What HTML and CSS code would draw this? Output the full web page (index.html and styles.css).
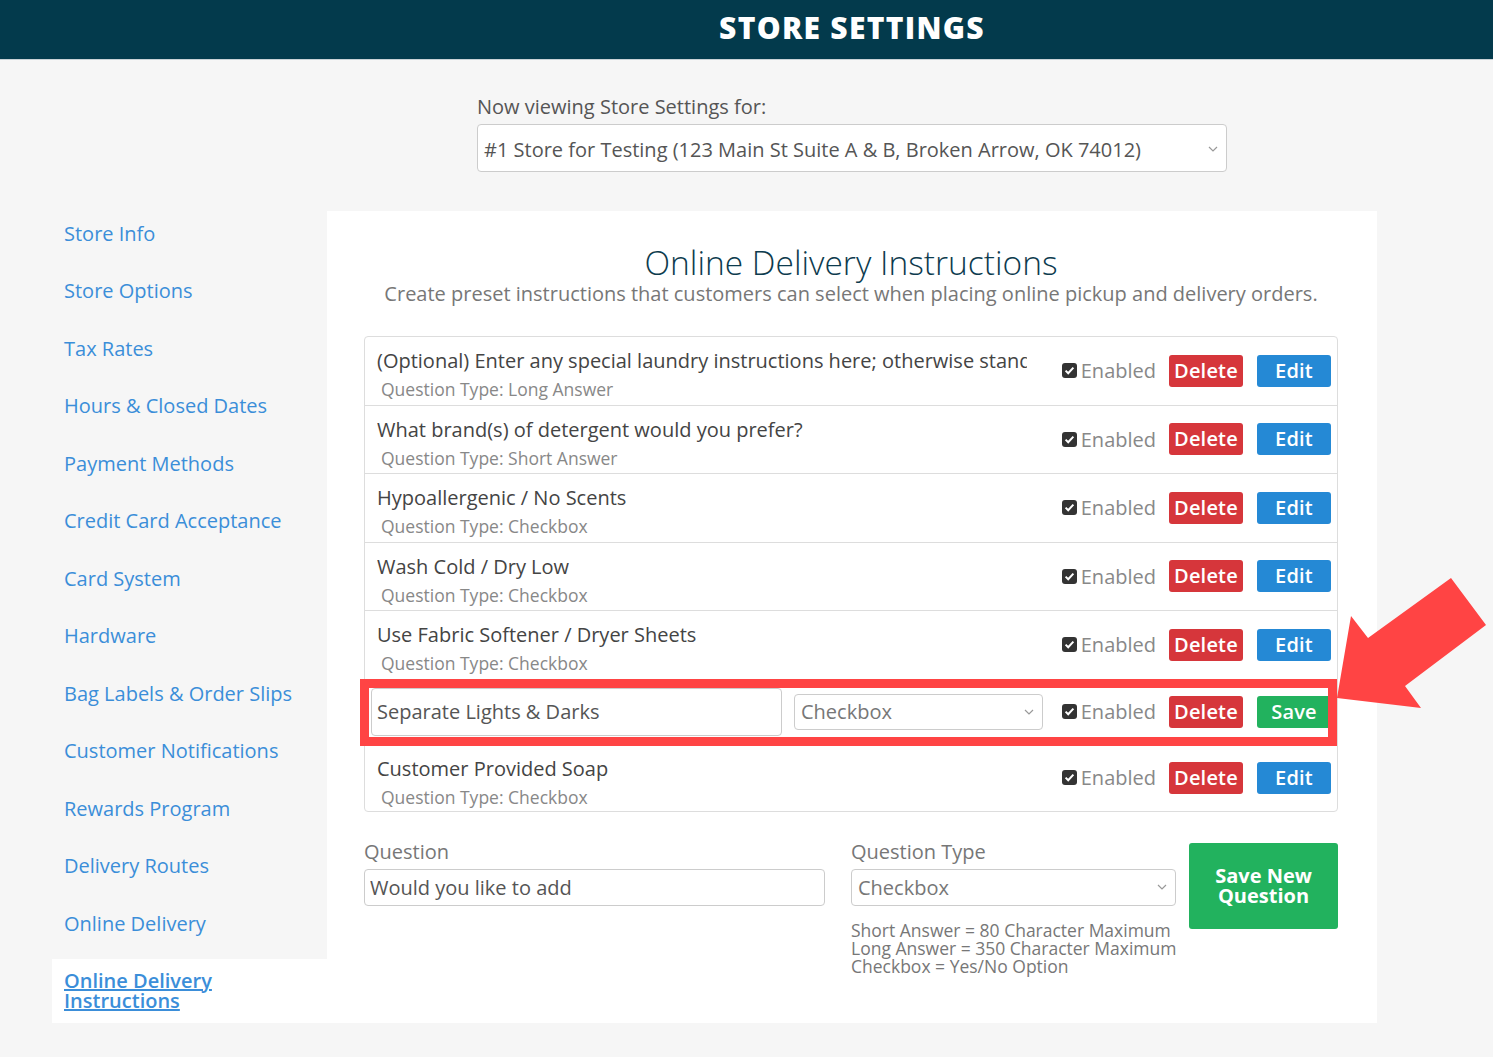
FILE: index.html
```html
<!DOCTYPE html>
<html lang="en">
<head>
<meta charset="utf-8">
<title>Store Settings</title>
<link rel="stylesheet" href="styles.css">
</head>
<body>
<header class="topbar">
  <div></div>
  <h1 class="topbar-title">STORE SETTINGS</h1>
</header>

<div class="page">
  <div class="store-picker">
    <div class="picker-label">Now viewing Store Settings for:</div>
    <div class="select select-store">
      <span>#1 Store for Testing (123 Main St Suite A &amp; B, Broken Arrow, OK 74012)</span>
      <svg class="chev" width="10" height="6" viewBox="0 0 10 6"><path d="M1 1l4 4 4-4" fill="none" stroke="#999" stroke-width="1.2"/></svg>
    </div>
  </div>

  <nav class="sidebar">
    <a class="nav-link" href="#">Store Info</a>
    <a class="nav-link" href="#">Store Options</a>
    <a class="nav-link" href="#">Tax Rates</a>
    <a class="nav-link" href="#">Hours &amp; Closed Dates</a>
    <a class="nav-link" href="#">Payment Methods</a>
    <a class="nav-link" href="#">Credit Card Acceptance</a>
    <a class="nav-link" href="#">Card System</a>
    <a class="nav-link" href="#">Hardware</a>
    <a class="nav-link" href="#">Bag Labels &amp; Order Slips</a>
    <a class="nav-link" href="#">Customer Notifications</a>
    <a class="nav-link" href="#">Rewards Program</a>
    <a class="nav-link" href="#">Delivery Routes</a>
    <a class="nav-link" href="#">Online Delivery</a>
    <a class="nav-link nav-active" href="#">Online Delivery Instructions</a>
  </nav>

  <main class="panel">
    <h2 class="panel-title">Online Delivery Instructions</h2>
    <p class="panel-sub">Create preset instructions that customers can select when placing online pickup and delivery orders.</p>

    <div class="q-list">
      <div class="q-row">
        <div class="q-text">
          <div class="q-title">(Optional) Enter any special laundry instructions here; otherwise standard procedures will be followed.</div>
          <div class="q-type">Question Type: Long Answer</div>
        </div>
        <div class="q-controls">
          <span class="enabled"><svg class="cb" width="15" height="15" viewBox="0 0 15 15"><rect width="15" height="15" rx="3" fill="#333"/><path d="M3.6 7.6l2.6 2.6 5.2-5.6" fill="none" stroke="#fff" stroke-width="2"/></svg>Enabled</span>
          <button class="btn btn-delete">Delete</button>
          <button class="btn btn-edit">Edit</button>
        </div>
      </div>
      <div class="q-row">
        <div class="q-text">
          <div class="q-title">What brand(s) of detergent would you prefer?</div>
          <div class="q-type">Question Type: Short Answer</div>
        </div>
        <div class="q-controls">
          <span class="enabled"><svg class="cb" width="15" height="15" viewBox="0 0 15 15"><rect width="15" height="15" rx="3" fill="#333"/><path d="M3.6 7.6l2.6 2.6 5.2-5.6" fill="none" stroke="#fff" stroke-width="2"/></svg>Enabled</span>
          <button class="btn btn-delete">Delete</button>
          <button class="btn btn-edit">Edit</button>
        </div>
      </div>
      <div class="q-row">
        <div class="q-text">
          <div class="q-title">Hypoallergenic / No Scents</div>
          <div class="q-type">Question Type: Checkbox</div>
        </div>
        <div class="q-controls">
          <span class="enabled"><svg class="cb" width="15" height="15" viewBox="0 0 15 15"><rect width="15" height="15" rx="3" fill="#333"/><path d="M3.6 7.6l2.6 2.6 5.2-5.6" fill="none" stroke="#fff" stroke-width="2"/></svg>Enabled</span>
          <button class="btn btn-delete">Delete</button>
          <button class="btn btn-edit">Edit</button>
        </div>
      </div>
      <div class="q-row">
        <div class="q-text">
          <div class="q-title">Wash Cold / Dry Low</div>
          <div class="q-type">Question Type: Checkbox</div>
        </div>
        <div class="q-controls">
          <span class="enabled"><svg class="cb" width="15" height="15" viewBox="0 0 15 15"><rect width="15" height="15" rx="3" fill="#333"/><path d="M3.6 7.6l2.6 2.6 5.2-5.6" fill="none" stroke="#fff" stroke-width="2"/></svg>Enabled</span>
          <button class="btn btn-delete">Delete</button>
          <button class="btn btn-edit">Edit</button>
        </div>
      </div>
      <div class="q-row">
        <div class="q-text">
          <div class="q-title">Use Fabric Softener / Dryer Sheets</div>
          <div class="q-type">Question Type: Checkbox</div>
        </div>
        <div class="q-controls">
          <span class="enabled"><svg class="cb" width="15" height="15" viewBox="0 0 15 15"><rect width="15" height="15" rx="3" fill="#333"/><path d="M3.6 7.6l2.6 2.6 5.2-5.6" fill="none" stroke="#fff" stroke-width="2"/></svg>Enabled</span>
          <button class="btn btn-delete">Delete</button>
          <button class="btn btn-edit">Edit</button>
        </div>
      </div>
      <div class="q-row q-row-edit">
        <input class="input input-edit" type="text" value="Separate Lights &amp; Darks">
        <div class="select select-edit">
          <span>Checkbox</span>
          <svg class="chev" width="10" height="6" viewBox="0 0 10 6"><path d="M1 1l4 4 4-4" fill="none" stroke="#999" stroke-width="1.2"/></svg>
        </div>
        <div class="q-controls">
          <span class="enabled"><svg class="cb" width="15" height="15" viewBox="0 0 15 15"><rect width="15" height="15" rx="3" fill="#333"/><path d="M3.6 7.6l2.6 2.6 5.2-5.6" fill="none" stroke="#fff" stroke-width="2"/></svg>Enabled</span>
          <button class="btn btn-delete">Delete</button>
          <button class="btn btn-save">Save</button>
        </div>
      </div>
      <div class="q-row q-row-last">
        <div class="q-text">
          <div class="q-title">Customer Provided Soap</div>
          <div class="q-type">Question Type: Checkbox</div>
        </div>
        <div class="q-controls">
          <span class="enabled"><svg class="cb" width="15" height="15" viewBox="0 0 15 15"><rect width="15" height="15" rx="3" fill="#333"/><path d="M3.6 7.6l2.6 2.6 5.2-5.6" fill="none" stroke="#fff" stroke-width="2"/></svg>Enabled</span>
          <button class="btn btn-delete">Delete</button>
          <button class="btn btn-edit">Edit</button>
        </div>
      </div>
    </div>

    <div class="new-form">
      <div class="field field-question">
        <div class="field-label">Question</div>
        <input class="input input-new" type="text" value="Would you like to add">
      </div>
      <div class="field field-type">
        <div class="field-label">Question Type</div>
        <div class="select select-new">
          <span>Checkbox</span>
          <svg class="chev" width="10" height="6" viewBox="0 0 10 6"><path d="M1 1l4 4 4-4" fill="none" stroke="#999" stroke-width="1.2"/></svg>
        </div>
        <div class="help">Short Answer = 80 Character Maximum<br>Long Answer = 350 Character Maximum<br>Checkbox = Yes/No Option</div>
      </div>
      <button class="btn btn-save-new">Save New<br>Question</button>
    </div>
  </main>
</div>

<svg class="annot-arrow" width="152" height="136" viewBox="0 0 152 136"><polygon points="116,2 151,49 70,110 86,132 2,122 16,40 33,62" fill="#ff4444"/></svg>
</body>
</html>
```

FILE: styles.css
```css
* { box-sizing: border-box; }

body {
  margin: 0;
  background: #f6f6f6;
  font-family: "Open Sans", "DejaVu Sans", sans-serif;
  color: #555;
  position: relative;
  min-height: 1057px;
}

.topbar {
  height: 60px;
  background: #033a4c;
  display: grid;
  grid-template-columns: 275px 1050px;
  padding-left: 52px;
  border-bottom: 1px solid #c9d2d6;
}

.topbar-title {
  margin: 0;
  text-align: center;
  color: #fff;
  font-family: "Open Sans", sans-serif;
  font-weight: 800;
  font-size: 30px;
  line-height: 56px;
  letter-spacing: 1.3px;
}

.page {
  display: grid;
  grid-template-columns: 275px 1050px;
  margin-left: 52px;
}

.store-picker {
  grid-column: 2;
  grid-row: 1;
  width: 750px;
  margin: 35px auto 39px;
}

.picker-label {
  font-size: 20px;
  line-height: 24px;
  color: #555;
  margin-bottom: 5px;
}

.select {
  display: flex;
  align-items: center;
  justify-content: space-between;
  background: #fff;
  border: 1px solid #ccc;
  border-radius: 4px;
  color: #555;
}

.select-store {
  height: 48px;
  padding: 2px 8px 0 6px;
  font-size: 20px;
}

.sidebar {
  grid-column: 1;
  grid-row: 2;
  display: flex;
  flex-direction: column;
}

.nav-link {
  display: block;
  padding: 8.5px 12px 22px;
  font-size: 20px;
  line-height: 27px;
  color: #3b8ed9;
  text-decoration: none;
}

.nav-active {
  background: #fff;
  padding: 12px 12px;
  line-height: 20px;
  font-weight: 600;
  text-decoration: underline;
}

.panel {
  grid-column: 2;
  grid-row: 2;
  background: #fff;
  padding: 33px 39px 0 37px;
}

.panel-title {
  margin: 0;
  text-align: center;
  font-size: 33.5px;
  font-weight: 300;
  line-height: 36px;
  color: #0d3b4e;
}

.panel-sub {
  margin: 1px 0 29px;
  text-align: center;
  font-size: 20px;
  line-height: 26px;
  color: #777;
}

.q-list {
  border: 1px solid #ddd;
  border-radius: 4px;
}

.q-row {
  display: flex;
  align-items: center;
  height: 68.5px;
  padding: 0 6px 0 12px;
  border-bottom: 1px solid #ddd;
}

.q-row-last {
  height: 66px;
  border-bottom: none;
}

.q-text {
  flex: 1;
  min-width: 0;
  align-self: stretch;
  padding-top: 10px;
  margin-right: 35px;
}

.q-title {
  white-space: nowrap;
  overflow: hidden;
  font-size: 20px;
  line-height: 28px;
  color: #444;
}

.q-type {
  padding-left: 4px;
  font-size: 17.5px;
  line-height: 28px;
  color: #888;
}

.q-controls {
  display: flex;
  align-items: center;
  margin-left: auto;
}

.enabled {
  display: flex;
  align-items: center;
  font-size: 20px;
  color: #888;
}

.cb {
  margin-right: 4px;
}

.btn {
  border: none;
  border-radius: 3px;
  color: #fff;
  font-family: "Open Sans", sans-serif;
  font-weight: 600;
  font-size: 20px;
  padding: 0;
  cursor: pointer;
}

.q-controls .btn {
  width: 74px;
  height: 32px;
  line-height: 32px;
  letter-spacing: 0.2px;
}

.btn-delete {
  background: #d6363b;
  margin-left: 13px;
}

.btn-edit {
  background: #2589d5;
  margin-left: 14px;
}

.btn-save {
  background: #22b25e;
  margin-left: 14px;
}

.q-row-edit {
  position: relative;
  height: 65px;
  padding-left: 6px;
}

.q-row-edit::after {
  content: "";
  position: absolute;
  left: -5px;
  right: 0;
  top: -1px;
  bottom: -2px;
  border: 9px solid #ff4444;
  pointer-events: none;
}

.input {
  font-family: "Open Sans", sans-serif;
  font-size: 20px;
  color: #555;
  background: #fff;
  border: 1px solid #ccc;
  border-radius: 4px;
  padding: 0 5px;
  outline: none;
}

.input-edit {
  width: 411px;
  height: 48px;
}

.select-edit {
  width: 249px;
  height: 36px;
  margin-left: 12px;
  padding: 0 8px 0 6px;
  font-size: 20px;
  color: #777;
}

.new-form {
  display: flex;
  align-items: flex-start;
  margin-top: 31px;
}

.field-label {
  font-size: 20px;
  line-height: 24px;
  color: #777;
  margin: -3px 0 5px;
}

.field-question {
  width: 461px;
}

.input-new {
  width: 100%;
  height: 37px;
}

.field-type {
  width: 325px;
  margin-left: 26px;
}

.select-new {
  height: 37px;
  padding: 0 8px 0 6px;
  font-size: 20px;
  color: #777;
}

.help {
  margin-top: 15px;
  font-size: 17.5px;
  line-height: 18px;
  color: #777;
  white-space: nowrap;
}

.btn-save-new {
  width: 149px;
  height: 86px;
  margin-left: 13px;
  background: #22b25e;
  line-height: 20px;
  font-weight: 700;
}

.annot-arrow {
  position: absolute;
  left: 1335px;
  top: 576px;
}
```
